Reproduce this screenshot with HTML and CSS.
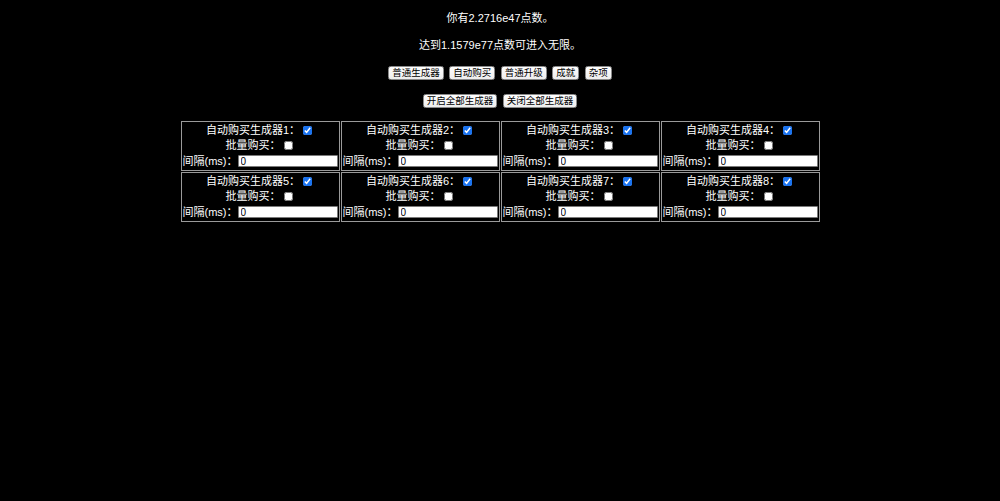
FILE: index.html
```html
<!DOCTYPE html>
<html lang="zh">
<head>
<meta charset="utf-8">
<title>生成器</title>
<link rel="stylesheet" href="styles.css">
</head>
<body>
<div class="page">
  <div class="line first">你有2.2716e47点数。</div>
  <div class="line second">达到1.1579e77点数可进入无限。</div>
  <div class="btnrow row1">
    <button class="btn">普通生成器</button>
    <button class="btn">自动购买</button>
    <button class="btn">普通升级</button>
    <button class="btn">成就</button>
    <button class="btn">杂项</button>
  </div>
  <div class="btnrow row2">
    <button class="btn">开启全部生成器</button>
    <button class="btn">关闭全部生成器</button>
  </div>
  <div class="grid">
    <div class="cell"><div class="l1">自动购买生成器1：<input class="cb" type="checkbox" checked></div><div class="l2">批量购买：<input class="cb" type="checkbox"></div><div class="l3">间隔(ms)：<input class="num" type="text" value="0"></div></div>
    <div class="cell"><div class="l1">自动购买生成器2：<input class="cb" type="checkbox" checked></div><div class="l2">批量购买：<input class="cb" type="checkbox"></div><div class="l3">间隔(ms)：<input class="num" type="text" value="0"></div></div>
    <div class="cell"><div class="l1">自动购买生成器3：<input class="cb" type="checkbox" checked></div><div class="l2">批量购买：<input class="cb" type="checkbox"></div><div class="l3">间隔(ms)：<input class="num" type="text" value="0"></div></div>
    <div class="cell"><div class="l1">自动购买生成器4：<input class="cb" type="checkbox" checked></div><div class="l2">批量购买：<input class="cb" type="checkbox"></div><div class="l3">间隔(ms)：<input class="num" type="text" value="0"></div></div>
    <div class="cell"><div class="l1">自动购买生成器5：<input class="cb" type="checkbox" checked></div><div class="l2">批量购买：<input class="cb" type="checkbox"></div><div class="l3">间隔(ms)：<input class="num" type="text" value="0"></div></div>
    <div class="cell"><div class="l1">自动购买生成器6：<input class="cb" type="checkbox" checked></div><div class="l2">批量购买：<input class="cb" type="checkbox"></div><div class="l3">间隔(ms)：<input class="num" type="text" value="0"></div></div>
    <div class="cell"><div class="l1">自动购买生成器7：<input class="cb" type="checkbox" checked></div><div class="l2">批量购买：<input class="cb" type="checkbox"></div><div class="l3">间隔(ms)：<input class="num" type="text" value="0"></div></div>
    <div class="cell"><div class="l1">自动购买生成器8：<input class="cb" type="checkbox" checked></div><div class="l2">批量购买：<input class="cb" type="checkbox"></div><div class="l3">间隔(ms)：<input class="num" type="text" value="0"></div></div>
  </div>
</div>
</body>
</html>
```
FILE: styles.css
```css
html, body {
  margin: 0;
  padding: 0;
  background: #000;
}
body {
  color: #fff;
  font-family: "Liberation Sans", "Noto Sans CJK SC", sans-serif;
  font-size: 11px;
}
.page {
  display: flex;
  flex-direction: column;
  align-items: center;
  padding-top: 10px;
}
.line {
  height: 16px;
  line-height: 16px;
  text-align: center;
  white-space: nowrap;
}
.second {
  margin-top: 11px;
}
.btnrow {
  display: flex;
  justify-content: center;
  gap: 5.5px;
  height: 14px;
}
.row1 {
  margin-top: 13px;
}
.row2 {
  margin-top: 14px;
}
.btn {
  box-sizing: border-box;
  height: 14px;
  margin: 0;
  padding: 0 3px;
  border: 1px solid #8a8a8a;
  border-radius: 2.5px;
  background: linear-gradient(#fefefe, #ededed);
  color: #000;
  font-family: "Liberation Sans", "Noto Sans CJK SC", sans-serif;
  font-size: 9.5px;
  line-height: 12px;
  white-space: nowrap;
}
.grid {
  margin-top: 13px;
  display: grid;
  grid-template-columns: repeat(4, 159px);
  gap: 1px;
}
.cell {
  box-sizing: border-box;
  height: 50px;
  border: 1px solid #9a9a9a;
  padding: 1px;
  text-align: center;
  white-space: nowrap;
}
.l1, .l2 {
  height: 15px;
  line-height: 15px;
  display: flex;
  justify-content: center;
  align-items: center;
}
.l3 {
  height: 16px;
  display: flex;
  align-items: center;
  justify-content: space-between;
  line-height: 16px;
}
.cb {
  width: 9px;
  height: 9px;
  margin: 0 2px 0 3px;
  accent-color: #1a73f0;
}
.num {
  box-sizing: border-box;
  width: 100px;
  height: 12px;
  margin: 0 1px 0 0;
  padding: 0 2px;
  border: 1px solid #7a7a7a;
  border-radius: 1px;
  background: #fff;
  color: #000;
  font-family: "Liberation Sans", sans-serif;
  font-size: 10px;
  line-height: 10px;
  outline: none;
}
```
